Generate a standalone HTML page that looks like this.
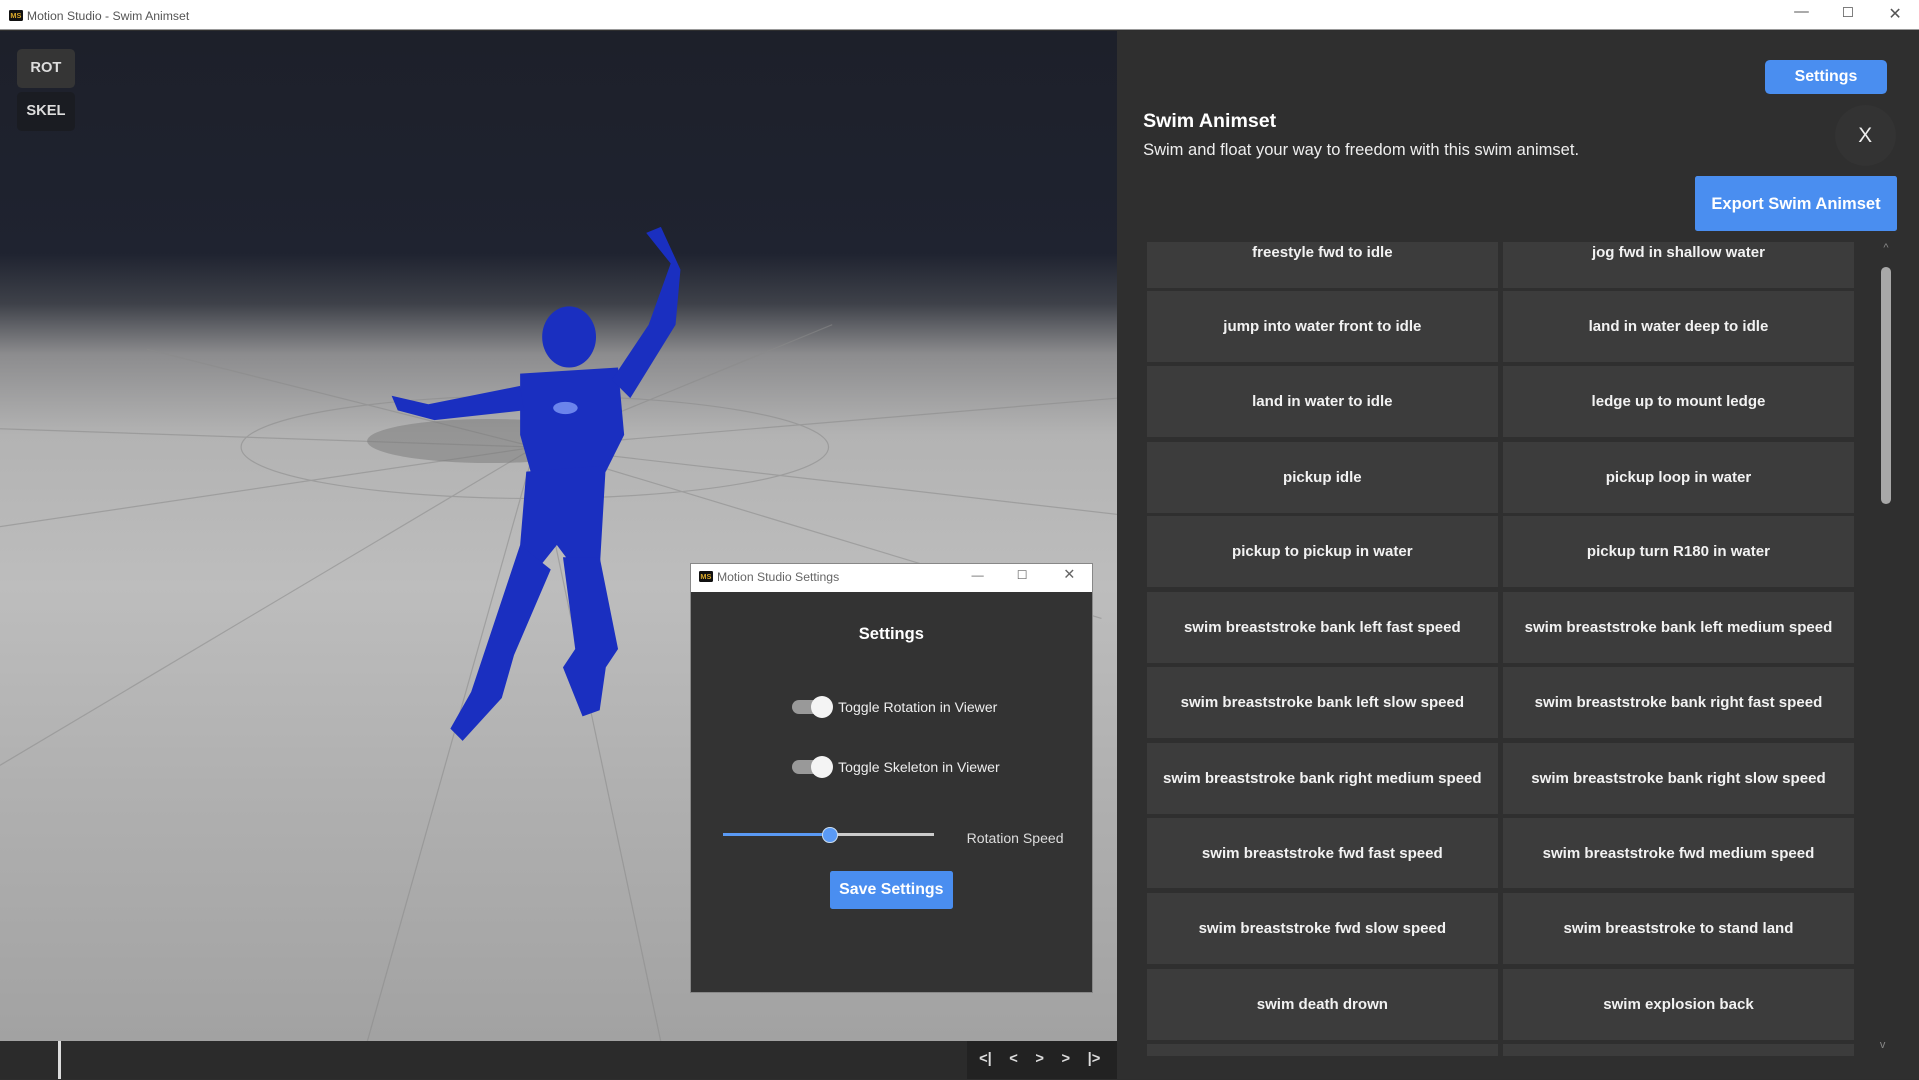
<!DOCTYPE html>
<html><head><meta charset="utf-8"><style>
html,body{margin:0;padding:0;width:1919px;height:1080px;overflow:hidden;background:#2e2e2e}
#w{zoom:1.22385;position:relative;width:1568px;height:882px;font-family:"Liberation Sans",sans-serif;overflow:hidden}
.abs{position:absolute}
.title{left:0;top:0;width:1568px;height:24px;background:#fff;border-bottom:1px solid #999;font-size:10px;color:#555}
.logo{display:inline-block;width:12px;height:9px;background:#111;color:#d9a82a;font-size:6px;line-height:9px;text-align:center;font-weight:bold;border-radius:1px}
.vb{background:#2a2a2a;color:#ddd;font-weight:bold;font-size:12px;text-align:center;border-radius:4px}
.cell{position:absolute;width:287px;height:58px;background:#3c3c3c;color:#f2f2f2;font-weight:bold;font-size:12.3px;display:flex;align-items:center;justify-content:center;white-space:nowrap}
.btn{background:#4a8ef0;color:#fff;font-weight:bold;text-align:center;border-radius:4px}
.tg{position:absolute;width:32px;height:12px;border-radius:6px;background:#999}
.tg:after{content:"";position:absolute;right:-2px;top:-3px;width:18px;height:18px;border-radius:50%;background:#f4f4f4}
</style></head><body><div id="w">
<div class="abs title"><span class="logo" style="position:absolute;left:7px;top:8px">MS</span><span style="position:absolute;left:22px;top:7px">Motion Studio - Swim Animset</span>
<span style="position:absolute;left:1466px;top:3px;font-size:12px">—</span><span style="position:absolute;left:1505px;top:4px;font-size:11px">☐</span><span style="position:absolute;left:1543px;top:3px;font-size:13px">✕</span></div>
<div class="abs" style="left:0;top:25px;width:913px;height:826px;background:linear-gradient(180deg,#1d202a 0%,#1f2330 22%,#3e4149 27%,#8c8c8e 32%,#b3b3b3 40%,#bdbdbd 55%,#b0b0b0 75%,#a2a2a2 100%)">
<svg width="913" height="826" style="position:absolute;left:0;top:0">
<g stroke="#8a8a8a" stroke-width="1" fill="none" opacity=".55">
<ellipse cx="437" cy="340" rx="240" ry="42"/>
<line x1="437" y1="340" x2="0" y2="405"/><line x1="437" y1="340" x2="913" y2="395"/>
<line x1="437" y1="340" x2="0" y2="325"/><line x1="437" y1="340" x2="913" y2="300"/>
<line x1="437" y1="340" x2="120" y2="260"/><line x1="437" y1="340" x2="900" y2="480"/>
<line x1="437" y1="340" x2="540" y2="826"/><line x1="437" y1="340" x2="300" y2="826"/>
<line x1="437" y1="340" x2="680" y2="240"/><line x1="437" y1="340" x2="0" y2="600"/>
</g>
<ellipse cx="400" cy="335" rx="100" ry="18" fill="#777" opacity=".5"/>
<g fill="#1a2fc0">
<ellipse cx="465" cy="250" rx="22" ry="25"/>
<path d="M425 280 L505 275 L510 330 L495 360 L435 365 L425 330 Z"/>
<path d="M430 360 L495 355 L490 440 L470 440 L455 420 L435 445 L425 420Z"/>
<path d="M425 290 L350 305 L320 298 L325 310 L355 318 L428 310Z"/>
<path d="M500 285 L530 240 L548 190 L528 165 L540 160 L556 195 L552 240 L515 300Z"/>
<path d="M425 420 L395 510 L385 540 L368 570 L378 580 L410 545 L420 510 L450 440Z"/>
<path d="M460 430 L490 430 L505 505 L495 520 L490 555 L476 560 L460 520 L470 505Z"/>
</g>
<ellipse cx="462" cy="308" rx="10" ry="5" fill="#8fa8ff" opacity=".7"/>
</svg></div>
<div class="abs vb" style="left:14px;top:40px;width:47px;height:32px;line-height:32px;background:#353535">ROT</div>
<div class="abs vb" style="left:14px;top:75px;width:47px;height:32px;line-height:32px;background:#1a1c22">SKEL</div>
<div class="abs" style="left:0;top:851px;width:913px;height:31px;background:#2b2b2b"></div>
<div class="abs" style="left:47px;top:851px;width:3px;height:31px;background:#ddd"></div>
<div class="abs" style="left:790px;top:851px;width:123px;height:31px;background:#222;color:#ddd;font-size:12px;font-weight:bold;line-height:31px;word-spacing:11px;padding-left:10px;box-sizing:border-box">&lt;| &lt; &gt; &gt; |&gt;</div>
<div class="abs" style="left:913px;top:25px;width:655px;height:857px;background:#2f2f2f"></div>
<div class="abs btn" style="left:1442px;top:49px;width:100px;height:28px;line-height:28px;font-size:13px">Settings</div>
<div class="abs" style="left:934px;top:90px;color:#fff;font-weight:bold;font-size:16px">Swim Animset</div>
<div class="abs" style="left:934px;top:114px;color:#eee;font-size:13.5px">Swim and float your way to freedom with this swim animset.</div>
<div class="abs" style="left:1499px;top:86px;width:50px;height:50px;border-radius:50%;background:#333;color:#eee;font-size:17px;line-height:50px;text-align:center">X</div>
<div class="abs btn" style="left:1385px;top:144px;width:165px;height:45px;line-height:45px;font-size:13.5px;border-radius:2px">Export Swim Animset</div>
<div class="abs" style="left:934px;top:198px;width:600px;height:665px;overflow:hidden">
<div class="cell" style="left:3px;top:-22px;height:59px;align-items:flex-start;padding-top:23px;box-sizing:border-box">freestyle fwd to idle</div>
<div class="cell" style="left:294px;top:-22px;height:59px;align-items:flex-start;padding-top:23px;box-sizing:border-box">jog fwd in shallow water</div>
<div class="cell" style="left:3px;top:40px">jump into water front to idle</div><div class="cell" style="left:294px;top:40px">land in water deep to idle</div>
<div class="cell" style="left:3px;top:101px">land in water to idle</div><div class="cell" style="left:294px;top:101px">ledge up to mount ledge</div>
<div class="cell" style="left:3px;top:163px">pickup idle</div><div class="cell" style="left:294px;top:163px">pickup loop in water</div>
<div class="cell" style="left:3px;top:224px">pickup to pickup in water</div><div class="cell" style="left:294px;top:224px">pickup turn R180 in water</div>
<div class="cell" style="left:3px;top:286px">swim breaststroke bank left fast speed</div><div class="cell" style="left:294px;top:286px">swim breaststroke bank left medium speed</div>
<div class="cell" style="left:3px;top:347px">swim breaststroke bank left slow speed</div><div class="cell" style="left:294px;top:347px">swim breaststroke bank right fast speed</div>
<div class="cell" style="left:3px;top:409px">swim breaststroke bank right medium speed</div><div class="cell" style="left:294px;top:409px">swim breaststroke bank right slow speed</div>
<div class="cell" style="left:3px;top:470px">swim breaststroke fwd fast speed</div><div class="cell" style="left:294px;top:470px">swim breaststroke fwd medium speed</div>
<div class="cell" style="left:3px;top:532px">swim breaststroke fwd slow speed</div><div class="cell" style="left:294px;top:532px">swim breaststroke to stand land</div>
<div class="cell" style="left:3px;top:594px">swim death drown</div><div class="cell" style="left:294px;top:594px">swim explosion back</div>
<div class="cell" style="left:3px;top:655px"></div><div class="cell" style="left:294px;top:655px"></div>
</div>
<div class="abs" style="left:1533px;top:198px;width:16px;height:665px;background:#2f2f2f;color:#888;font-size:9px;text-align:center">^</div>
<div class="abs" style="left:1537px;top:218px;width:8px;height:194px;background:#a8a8a8;border-radius:4px"></div>
<div class="abs" style="left:1536px;top:849px;color:#888;font-size:9px">v</div>
<div class="abs" style="left:564px;top:460px;width:329px;height:351px;background:#333;border:1px solid #888;box-sizing:border-box">
<div style="height:23px;background:#fff;position:relative;font-size:10px;color:#666">
<span class="logo" style="position:absolute;left:6px;top:6px">MS</span><span style="position:absolute;left:21px;top:5px">Motion Studio Settings</span>
<span style="position:absolute;left:229px;top:3px">—</span><span style="position:absolute;left:266px;top:3px">☐</span><span style="position:absolute;left:304px;top:2px;font-size:12px">✕</span></div>
<div class="abs" style="left:0;top:49px;width:327px;text-align:center;color:#fff;font-weight:bold;font-size:13.5px">Settings</div>
<div class="tg" style="left:82px;top:111px"></div><div class="abs" style="left:120px;top:110px;color:#eee;font-size:11.5px">Toggle Rotation in Viewer</div>
<div class="tg" style="left:82px;top:160px"></div><div class="abs" style="left:120px;top:159px;color:#eee;font-size:11.5px">Toggle Skeleton in Viewer</div>
<div class="abs" style="left:26px;top:220px;width:172px;height:2px;background:#ccc"></div>
<div class="abs" style="left:26px;top:220px;width:86px;height:2px;background:#5a9af5"></div>
<div class="abs" style="left:107px;top:215px;width:11px;height:11px;border-radius:50%;background:#5a9af5;border:1px solid #cde"></div>
<div class="abs" style="left:225px;top:217px;color:#ddd;font-size:11.5px">Rotation Speed</div>
<div class="abs btn" style="left:113px;top:251px;width:101px;height:31px;line-height:31px;font-size:13px;border-radius:2px">Save Settings</div>
</div>
</div></body></html>
